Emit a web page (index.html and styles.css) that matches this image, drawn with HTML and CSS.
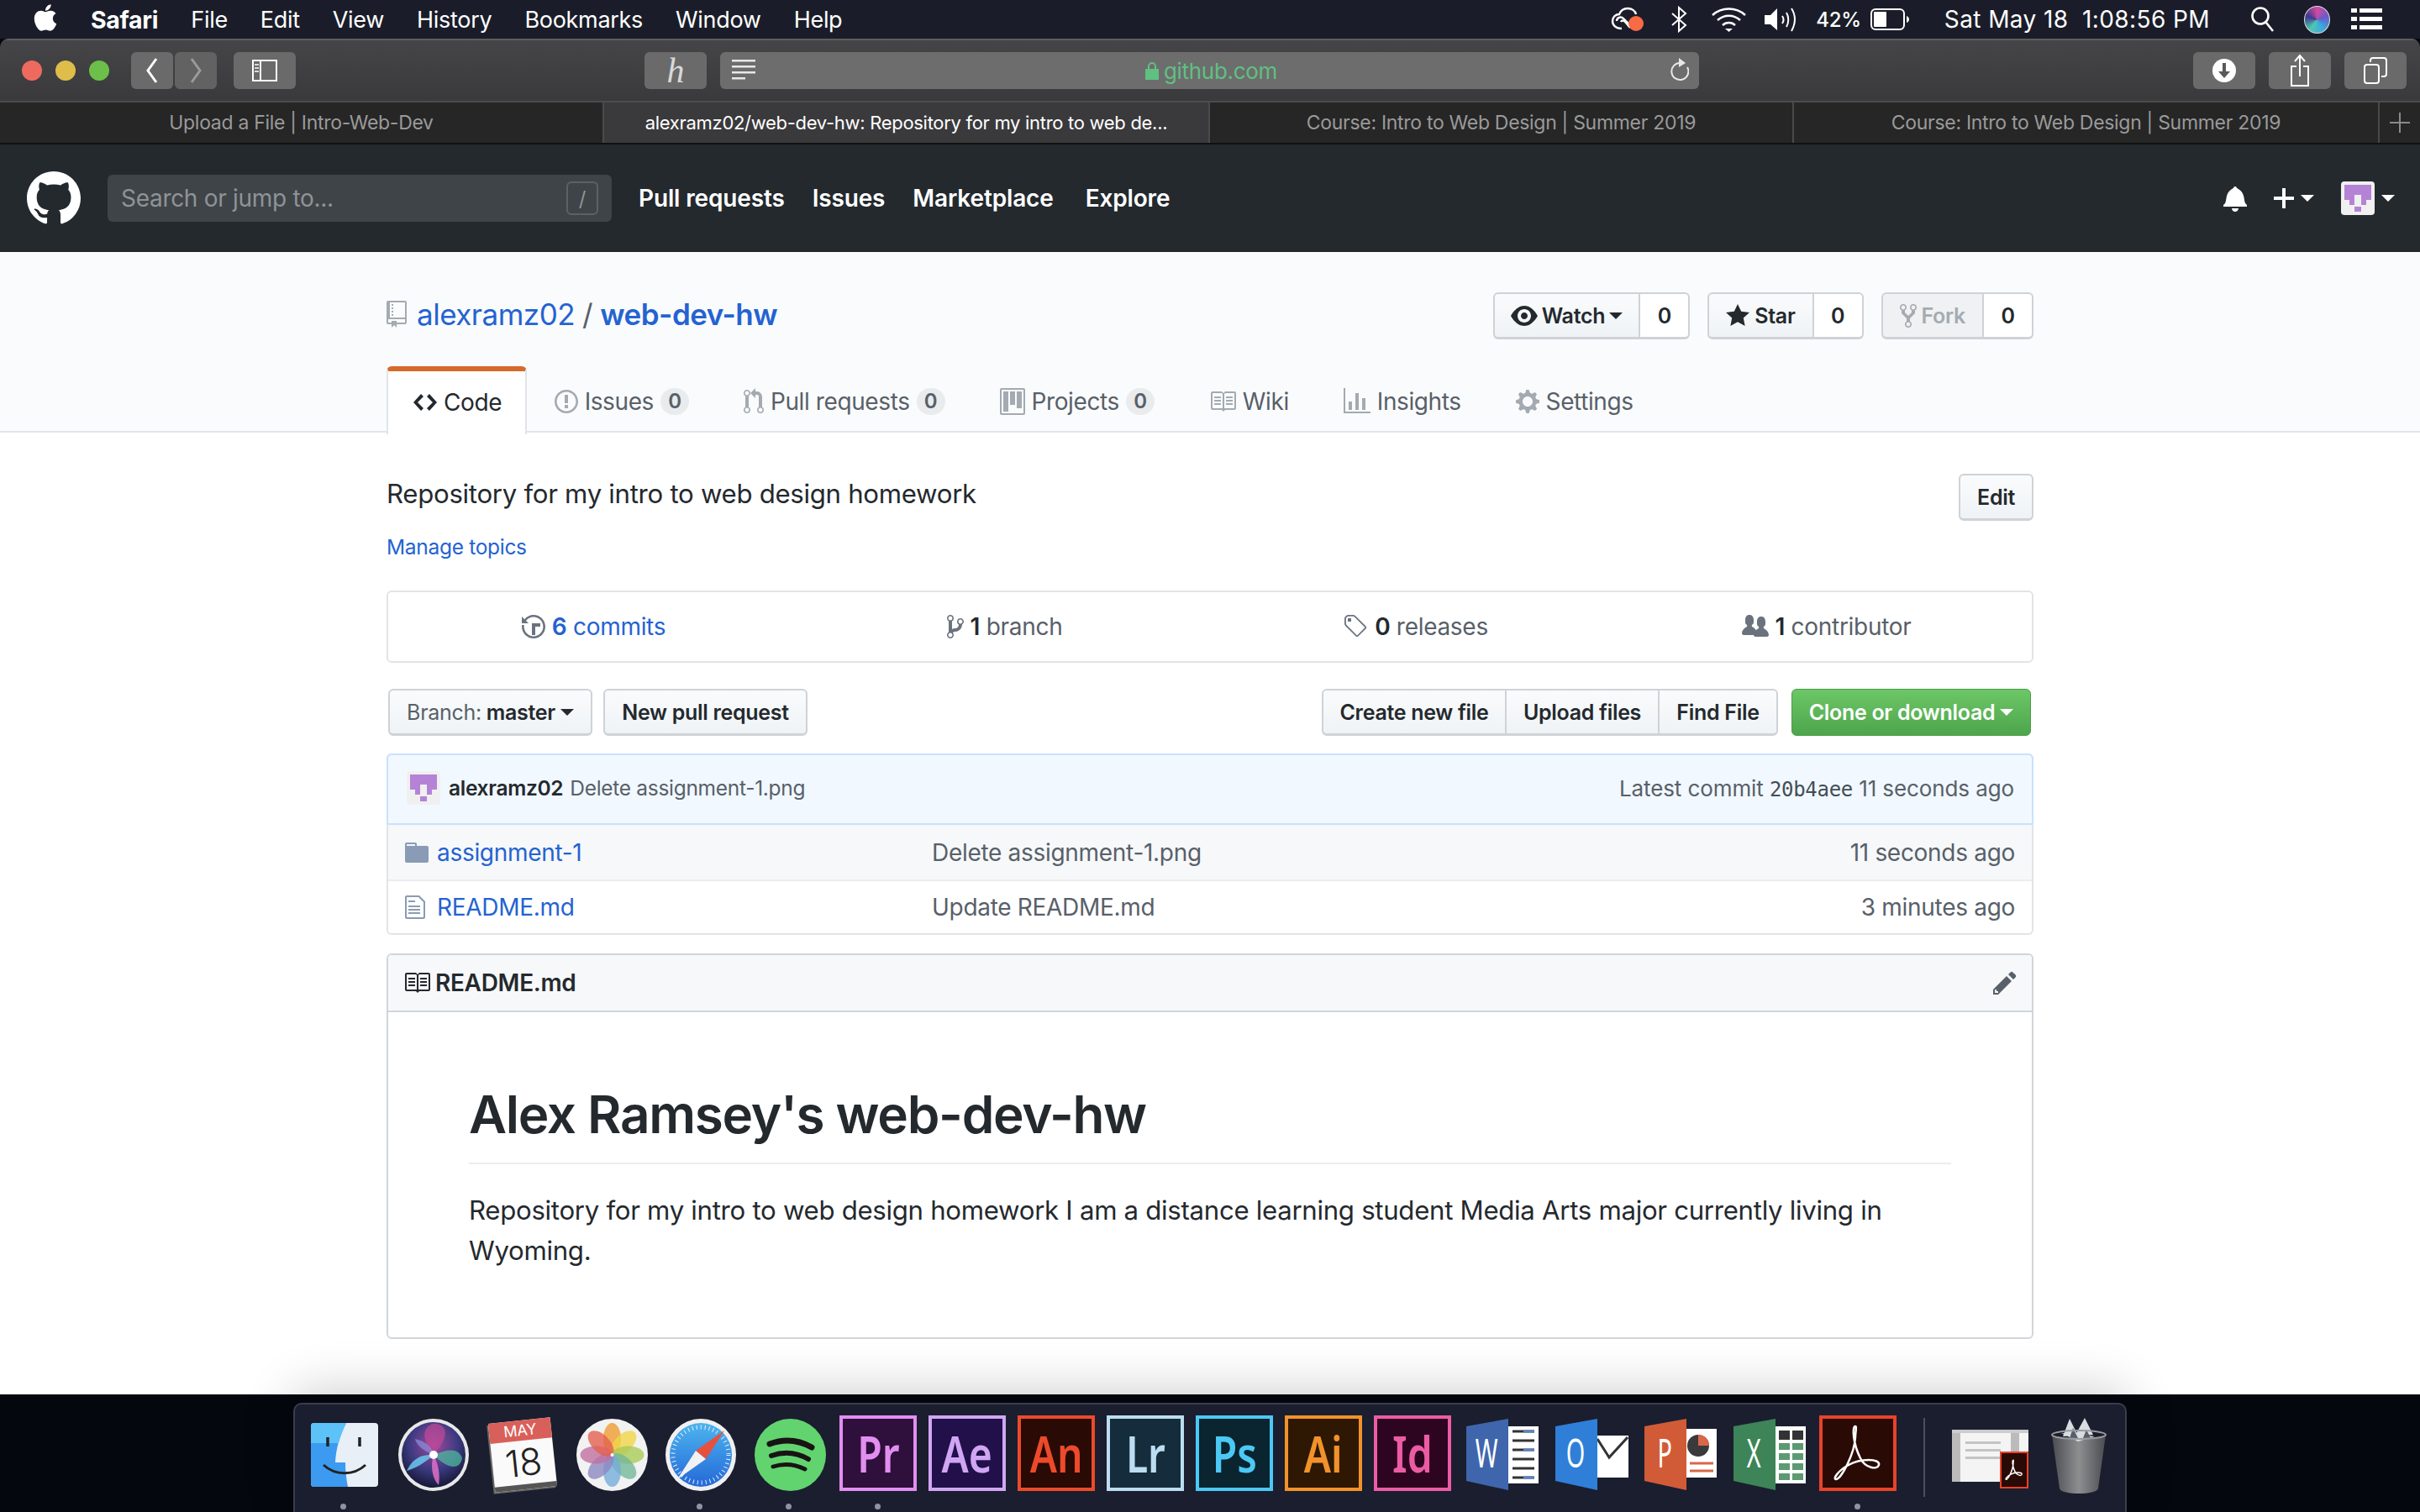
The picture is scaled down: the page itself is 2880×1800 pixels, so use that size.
FILE: index.html
```html
<!DOCTYPE html>
<html lang="en">
<head>
  <meta charset="UTF-8">
  <title>alexramz02/web-dev-hw</title>
  <link rel="stylesheet" href="styles.css">
</head>
<body>
  <!-- octicons -->
  <svg class="sprite" xmlns="http://www.w3.org/2000/svg">
    <symbol id="i-repo" viewBox="0 0 12 16"><path d="M4 9H3V8h1v1zm0-3H3v1h1V6zm0-2H3v1h1V4zm0-2H3v1h1V2zm8-1v12c0 .55-.45 1-1 1H6v2l-1.5-1.5L3 16v-2H1c-.55 0-1-.45-1-1V1c0-.55.45-1 1-1h10c.55 0 1 .45 1 1zm-1 10H1v2h2v-1h3v1h5v-2zm0-10H2v9h9V1z"/></symbol>
    <symbol id="i-eye" viewBox="0 0 16 16"><path d="M8.06 2C3 2 0 8 0 8s3 6 8.06 6C13 14 16 8 16 8s-3-6-7.94-6zM8 12c-2.2 0-4-1.78-4-4 0-2.2 1.8-4 4-4 2.22 0 4 1.8 4 4 0 2.22-1.78 4-4 4zm2-4c0 1.11-.89 2-2 2-1.11 0-2-.89-2-2 0-1.11.89-2 2-2 1.11 0 2 .89 2 2z"/></symbol>
    <symbol id="i-star" viewBox="0 0 14 16"><path d="M14 6l-4.9-.64L7 1 4.9 5.36 0 6l3.6 3.26L2.67 14 7 11.67 11.33 14l-.93-4.74L14 6z"/></symbol>
    <symbol id="i-fork" viewBox="0 0 10 16"><path d="M8 1a1.993 1.993 0 0 0-1 3.72V6L5 8 3 6V4.72A1.993 1.993 0 0 0 2 1a1.993 1.993 0 0 0-1 3.72V6.5l3 3v1.78A1.993 1.993 0 0 0 5 15a1.993 1.993 0 0 0 1-3.72V9.5l3-3V4.72A1.993 1.993 0 0 0 8 1zM2 4.2C1.34 4.2.8 3.65.8 3c0-.65.55-1.2 1.2-1.2.65 0 1.2.55 1.2 1.2 0 .65-.55 1.2-1.2 1.2zm3 10c-.66 0-1.2-.55-1.2-1.2 0-.65.55-1.2 1.2-1.2.65 0 1.2.55 1.2 1.2 0 .65-.55 1.2-1.2 1.2zm3-10c-.66 0-1.2-.55-1.2-1.2 0-.65.55-1.2 1.2-1.2.65 0 1.2.55 1.2 1.2 0 .65-.55 1.2-1.2 1.2z"/></symbol>
    <symbol id="i-code" viewBox="0 0 14 16"><path d="M9.5 3L8 4.5 11.5 8 8 11.5 9.5 13 14 8 9.5 3zm-5 0L0 8l4.5 5L6 11.5 2.5 8 6 4.5 4.5 3z"/></symbol>
    <symbol id="i-issue" viewBox="0 0 14 16"><path d="M7 2.3c3.14 0 5.7 2.56 5.7 5.7s-2.56 5.7-5.7 5.7A5.71 5.71 0 0 1 1.3 8c0-3.14 2.56-5.7 5.7-5.7zM7 1C3.14 1 0 4.14 0 8s3.14 7 7 7 7-3.14 7-7-3.14-7-7-7zm1 3H6v5h2V4zm0 6H6v2h2v-2z"/></symbol>
    <symbol id="i-pr" viewBox="0 0 12 16"><path d="M11 11.28V5c-.03-.78-.34-1.47-.94-2.06C9.46 2.35 8.78 2.03 8 2H7V0L4 3l3 3V4h1c.27.02.48.11.69.31.21.2.3.42.31.69v6.28A1.993 1.993 0 0 0 10 15a1.993 1.993 0 0 0 1-3.72zm-1 2.92c-.66 0-1.2-.55-1.2-1.2 0-.65.55-1.2 1.2-1.2.65 0 1.2.55 1.2 1.2 0 .65-.55 1.2-1.2 1.2zM4 3c0-1.11-.89-2-2-2a1.993 1.993 0 0 0-1 3.72v6.56A1.993 1.993 0 0 0 2 15a1.993 1.993 0 0 0 1-3.72V4.72c.59-.34 1-.98 1-1.72zm-.8 10c0 .66-.55 1.2-1.2 1.2-.65 0-1.2-.55-1.2-1.2 0-.65.55-1.2 1.2-1.2.65 0 1.2.55 1.2 1.2zM2 4.2C1.34 4.2.8 3.65.8 3c0-.65.55-1.2 1.2-1.2.65 0 1.2.55 1.2 1.2 0 .65-.55 1.2-1.2 1.2z"/></symbol>
    <symbol id="i-project" viewBox="0 0 15 16"><path fill-rule="evenodd" d="M10 12h3V2h-3v10zm-4-2h3V2H6v8zm-4 4h3V2H2v12zm-1 1h13V1H1v14zM14 0H1a1 1 0 0 0-1 1v14a1 1 0 0 0 1 1h13a1 1 0 0 0 1-1V1a1 1 0 0 0-1-1z"/></symbol>
    <symbol id="i-book" viewBox="0 0 16 16"><path d="M3 5h4v1H3V5zm0 3h4V7H3v1zm0 2h4V9H3v1zm11-5h-4v1h4V5zm0 2h-4v1h4V7zm0 2h-4v1h4V9zm2-6v9c0 .55-.45 1-1 1H9.5l-1 1-1-1H2c-.55 0-1-.45-1-1V3c0-.55.45-1 1-1h5.5l1 1 1-1H15c.55 0 1 .45 1 1zm-8 .5L7.5 3H2v9h6V3.5zm7-.5H9.5l-.5.5V12h6V3z"/></symbol>
    <symbol id="i-graph" viewBox="0 0 16 16"><path d="M16 14v1H0V0h1v14h15zM5 13H3V8h2v5zm4 0H7V3h2v10zm4 0h-2V6h2v7z"/></symbol>
    <symbol id="i-gear" viewBox="0 0 14 16"><path d="M14 8.77v-1.6l-1.94-.64-.45-1.09.88-1.84-1.13-1.13-1.81.91-1.09-.45-.69-1.92h-1.6l-.63 1.94-1.11.45-1.84-.88-1.13 1.13.91 1.81-.45 1.09L0 7.23v1.59l1.94.64.45 1.09-.88 1.84 1.13 1.13 1.81-.91 1.09.45.69 1.92h1.59l.63-1.94 1.11-.45 1.84.88 1.13-1.13-.92-1.81.47-1.09L14 8.75v.02zM7 11c-1.66 0-3-1.34-3-3s1.34-3 3-3 3 1.34 3 3-1.34 3-3 3z"/></symbol>
    <symbol id="i-history" viewBox="0 0 14 16"><path d="M8 13H6V6h5v2H8v5zM7 1C4.81 1 2.87 2.02 1.59 3.59L0 2v4h4L2.5 4.5C3.55 3.17 5.17 2.3 7 2.3c3.14 0 5.7 2.56 5.7 5.7s-2.56 5.7-5.7 5.7A5.71 5.71 0 0 1 1.3 8c0-.34.03-.67.09-1H.08C.03 7.33 0 7.66 0 8c0 3.86 3.14 7 7 7s7-3.14 7-7-3.14-7-7-7z"/></symbol>
    <symbol id="i-branch" viewBox="0 0 10 16"><path d="M10 5c0-1.11-.89-2-2-2a1.993 1.993 0 0 0-1 3.72v.3c-.02.52-.23.98-.63 1.38-.4.4-.86.61-1.38.63-.83.02-1.48.16-2 .45V4.72a1.993 1.993 0 0 0-1-3.72C.88 1 0 1.89 0 3a2 2 0 0 0 1 1.72v6.56c-.59.35-1 .99-1 1.72 0 1.11.89 2 2 2 1.11 0 2-.89 2-2 0-.53-.2-1-.53-1.36.09-.06.48-.41.59-.47.25-.11.56-.17.94-.17 1.05-.05 1.95-.45 2.75-1.25S8.95 7.77 9 6.73h-.02C9.59 6.37 10 5.73 10 5zM2 1.8c.66 0 1.2.55 1.2 1.2 0 .65-.55 1.2-1.2 1.2C1.35 4.2.8 3.65.8 3c0-.65.55-1.2 1.2-1.2zm0 12.41c-.66 0-1.2-.55-1.2-1.2 0-.65.55-1.2 1.2-1.2.65 0 1.2.55 1.2 1.2 0 .65-.55 1.2-1.2 1.2zm6-8c-.66 0-1.2-.55-1.2-1.2 0-.65.55-1.2 1.2-1.2.65 0 1.2.55 1.2 1.2 0 .65-.55 1.2-1.2 1.2z"/></symbol>
    <symbol id="i-tag" viewBox="0 0 15 16"><path d="M7.73 1.73C7.26 1.26 6.62 1 5.96 1H3.5C2.13 1 1 2.13 1 3.5v2.47c0 .66.27 1.3.73 1.77l6.06 6.06c.39.39 1.02.39 1.41 0l4.59-4.59a.996.996 0 0 0 0-1.41L7.73 1.73zM2.38 7.09c-.31-.3-.47-.7-.47-1.13V3.5c0-.88.72-1.59 1.59-1.59h2.47c.42 0 .83.16 1.13.47l6.14 6.13-4.73 4.73-6.13-6.15zM3.01 3h2v2H3V3h.01z"/></symbol>
    <symbol id="i-org" viewBox="0 0 16 16"><path d="M16 12.999c0 .439-.45 1-1 1H7.995c-.539 0-.994-.447-.995-.999H1c-.54 0-1-.561-1-1 0-2.634 3-4 3-4s.229-.409 0-1c-.841-.621-1.058-.59-1-3 .058-2.419 1.367-3 2.5-3s2.442.58 2.5 3c.058 2.41-.159 2.379-1 3-.229.59 0 1 0 1s1.549.711 2.42 2.088C9.196 9.369 10 8.999 10 8.999s.229-.409 0-1c-.841-.62-1.058-.59-1-3 .058-2.419 1.367-3 2.5-3s2.437.581 2.495 3c.059 2.41-.158 2.38-1 3-.229.59 0 1 0 1s3.005 1.366 3.005 4z"/></symbol>
    <symbol id="i-dir" viewBox="0 0 14 16"><path d="M13 4H7V3c0-.66-.31-1-1-1H1c-.55 0-1 .45-1 1v10c0 .55.45 1 1 1h12c.55 0 1-.45 1-1V5c0-.55-.45-1-1-1zM6 4H1V3h5v1z"/></symbol>
    <symbol id="i-file" viewBox="0 0 12 16"><path d="M6 5H2V4h4v1zM2 8h7V7H2v1zm0 2h7V9H2v1zm0 2h7v-1H2v1zm10-7.5V14c0 .55-.45 1-1 1H1c-.55 0-1-.45-1-1V2c0-.55.45-1 1-1h7.5L12 4.5zM11 5L8 2H1v12h10V5z"/></symbol>
    <symbol id="i-pencil" viewBox="0 0 14 16"><path d="M0 12v3h3l8-8-3-3-8 8zm3 2H1v-2h1v1h1v1zm10.3-9.3L12 6 9 3l1.3-1.3a.996.996 0 0 1 1.41 0l1.59 1.59c.39.39.39 1.02 0 1.41z"/></symbol>
    <symbol id="i-github" viewBox="0 0 16 16"><path d="M8 0C3.58 0 0 3.58 0 8c0 3.54 2.29 6.53 5.47 7.59.4.07.55-.17.55-.38 0-.19-.01-.82-.01-1.49-2.01.37-2.53-.49-2.69-.94-.09-.23-.48-.94-.82-1.13-.28-.15-.68-.52-.01-.53.63-.01 1.08.58 1.23.82.72 1.21 1.87.87 2.33.66.07-.52.28-.87.51-1.07-1.78-.2-3.64-.89-3.64-3.95 0-.87.31-1.59.82-2.15-.08-.2-.36-1.02.08-2.12 0 0 .67-.21 2.2.82.64-.18 1.32-.27 2-.27.68 0 1.36.09 2 .27 1.53-1.04 2.2-.82 2.2-.82.44 1.1.16 1.92.08 2.12.51.56.82 1.27.82 2.15 0 3.07-1.87 3.75-3.65 3.95.29.25.54.73.54 1.48 0 1.07-.01 1.93-.01 2.2 0 .21.15.46.55.38A8.013 8.013 0 0 0 16 8c0-4.42-3.58-8-8-8z"/></symbol>
    <symbol id="i-bell" viewBox="0 0 14 16"><path d="M14 12v1H0v-1l.73-.58c.77-.77.81-2.55 1.19-4.42C2.69 3.23 6 2 6 2c0-.55.45-1 1-1s1 .45 1 1c0 0 3.39 1.23 4.16 5 .38 1.88.42 3.66 1.19 4.42l.66.58H14zm-7 4c1.11 0 2-.89 2-2H5c0 1.11.89 2 2 2z"/></symbol>
    <symbol id="i-plus" viewBox="0 0 12 16"><path d="M12 9H7v5H5V9H0V7h5V2h2v5h5v2z"/></symbol>
    <symbol id="i-avatar" viewBox="0 0 40 40">
      <rect width="40" height="40" rx="4" fill="#f0f0f0"/>
      <path d="M4 4h32v18h-6v6h-6V16h-8v12h-6v-6H4z" fill="#b583d6"/>
      <rect x="16" y="30" width="8" height="6" fill="#b583d6"/>
    </symbol>
  </svg>

  <div class="menubar">
    <svg class="apple" viewBox="0 0 384 512"><path fill="#fff" d="M318.7 268.7c-.2-36.7 16.4-64.4 50-84.8-18.8-26.9-47.2-41.7-84.7-44.6-35.5-2.8-74.3 20.7-88.5 20.7-15 0-49.4-19.7-76.4-19.7C63.3 141.2 4 184.8 4 273.5q0 39.3 14.4 81.2c12.8 36.7 59 126.7 107.2 125.2 25.2-.6 43-17.9 75.8-17.9 31.8 0 48.3 17.9 76.4 17.9 48.6-.7 90.4-82.5 102.6-119.3-65.2-30.7-61.7-90-61.7-91.9zm-56.6-164.2c27.3-32.4 24.8-61.9 24-72.5-24.1 1.4-52 16.4-67.9 34.9-17.5 19.8-27.8 44.3-25.6 71.9 26.1 2 49.9-11.4 69.5-34.3z"/></svg>
    <nav class="menu-items">
      <span class="menu-app">Safari</span>
      <span>File</span>
      <span>Edit</span>
      <span>View</span>
      <span>History</span>
      <span>Bookmarks</span>
      <span>Window</span>
      <span>Help</span>
    </nav>
    <div class="status">
      <svg class="st-cc" width="42" height="32" viewBox="0 0 42 32" fill="none" stroke="#fff" stroke-width="2.4">
        <path d="M14 27C7 27 3 23 3 18c0-5 4-8 8-8 2-5 6-7 10-7 5 0 9 3 10 7"/>
        <path d="M8 18c0-4 5-6 8-3l9 9" /><path d="M13 19c1-2 3-2 5 0l6 7"/>
        <circle cx="31" cy="21" r="9" fill="#f96b45" stroke="none"/>
      </svg>
      <svg class="st-bt" width="20" height="32" viewBox="0 0 20 32" fill="none" stroke="#fff" stroke-width="2"><path d="M2 9l16 14-8 7V2l8 7L2 23"/></svg>
      <svg class="st-wifi" width="43" height="32" viewBox="0 0 43 32" fill="none" stroke="#fff" stroke-width="2.6"><path d="M2 11c11-10 28-10 39 0"/><path d="M8 17c8-7 19-7 27 0"/><path d="M14 23c4-4 11-4 15 0"/><path d="M17 27h9l-4.500 4z" fill="#fff" stroke="none"/></svg>
      <svg class="st-vol" width="41" height="32" viewBox="0 0 41 32" fill="none" stroke="#fff" stroke-width="2"><path d="M1 11h7l8-8v26l-8-7H1z" fill="#fff" stroke="none"/><path d="M22 12c2 3 2 6 0 9"/><path d="M27 8c3 5 3 12 0 17"/><path d="M33 3c5 8 5 18 0 27"/></svg>
      <span class="st-batt">42%</span>
      <svg class="st-battery" width="46" height="26" viewBox="0 0 46 26"><rect x="1" y="1" width="39" height="24" rx="5" fill="none" stroke="#fff" stroke-width="2"/><rect x="4" y="4" width="15" height="18" rx="1" fill="#fff"/><path d="M43 9c2 1 3 2 3 4s-1 3-3 4z" fill="#fff"/></svg>
      <span class="st-time">Sat May 18&nbsp;&nbsp;1:08:56 PM</span>
      <svg class="st-search" width="29" height="32" viewBox="0 0 29 32" fill="none" stroke="#fff" stroke-width="2.6"><circle cx="12" cy="12" r="9.500"/><path d="M19 20l8 10"/></svg>
      <span class="st-siri"></span>
      <svg class="st-list" width="37" height="26" viewBox="0 0 37 26" fill="#fff"><rect width="7" height="5"/><rect x="10" width="27" height="5"/><rect y="10" width="7" height="5"/><rect x="10" y="10" width="27" height="5"/><rect y="20" width="7" height="5"/><rect x="10" y="20" width="27" height="5"/></svg>
    </div>
  </div>

  <div class="window">
    <div class="toolbar">
      <div class="lights"><i class="red"></i><i class="yellow"></i><i class="green"></i></div>
      <button class="tb-btn tb-back"><svg width="20" height="34" viewBox="0 0 20 34" fill="none" stroke="#fff" stroke-width="3"><path d="M15 3L5 17l10 14"/></svg></button>
      <button class="tb-btn tb-fwd"><svg width="20" height="34" viewBox="0 0 20 34" fill="none" stroke="#9a9a9a" stroke-width="3"><path d="M5 3l10 14L5 31"/></svg></button>
      <button class="tb-btn tb-wide tb-side"><svg width="30" height="26" viewBox="0 0 30 26" fill="none" stroke="#fff" stroke-width="2"><rect x="1" y="1" width="28" height="24"/><path d="M10 1v24"/><path d="M3 6h5M3 10h5M3 14h5" stroke-width="1.500"/></svg></button>
      <button class="tb-btn tb-wide tb-hiero"><span>h</span></button>
      <div class="urlbar">
        <svg class="url-reader" width="28" height="26" viewBox="0 0 28 26" fill="#e8e8e8"><rect width="28" height="2.500"/><rect y="7" width="28" height="2.500"/><rect y="14" width="28" height="2.500"/><rect y="21" width="16" height="2.500"/></svg>
        <div class="url-text"><svg width="16" height="22" viewBox="0 0 16 22" fill="#5fc081"><rect y="9" width="16" height="13"/><path d="M3 10V6a5 5 0 0 1 10 0v4h-2V6a3 3 0 0 0-6 0v4z"/></svg>github.com</div>
        <svg class="url-reload" width="24" height="32" viewBox="0 0 24 32" fill="none" stroke="#e8e8e8" stroke-width="2"><path d="M14 7a10 10 0 1 0 8 5"/><path d="M12 1l8 6-8 5z" fill="#e8e8e8" stroke="none"/></svg>
      </div>
      <div class="tb-right">
        <button class="tb-btn tb-wide"><svg width="28" height="28" viewBox="0 0 28 28"><circle cx="14" cy="14" r="14" fill="#fff"/><path d="M14 23l-7-8h5V5h4v10h5z" fill="#5a5a5a"/></svg></button>
        <button class="tb-btn tb-wide"><svg width="24" height="40" viewBox="0 0 24 40" fill="none" stroke="#fff" stroke-width="2"><path d="M8 15H2v23h20V15h-6"/><path d="M12 27V3"/><path d="M6 9l6-7 6 7" /></svg></button>
        <button class="tb-btn tb-wide"><svg width="28" height="32" viewBox="0 0 28 32" fill="none" stroke="#fff" stroke-width="2"><rect x="1" y="9" width="17" height="22" rx="3"/><path d="M8 6V4a3 3 0 0 1 3-3h13a3 3 0 0 1 3 3v16a3 3 0 0 1-3 3h-3"/></svg></button>
      </div>
    </div>
    <div class="tabbar">
      <div class="tab tab-1">Upload a File | Intro-Web-Dev</div>
      <div class="tab tab-2 tab-active">alexramz02/web-dev-hw: Repository for my intro to web de...</div>
      <div class="tab tab-3">Course: Intro to Web Design | Summer 2019</div>
      <div class="tab tab-4">Course: Intro to Web Design | Summer 2019</div>
      <div class="tab tab-plus"><svg width="24" height="24" viewBox="0 0 24 24" fill="#8a8a8a"><rect x="11" width="2" height="24"/><rect y="11" width="24" height="2"/></svg></div>
    </div>

    <header class="gh-header">
      <svg class="gh-logo"><use href="#i-github"/></svg>
      <div class="gh-search"><span>Search or jump to...</span><kbd>/</kbd></div>
      <nav class="gh-nav">
        <a>Pull requests</a>
        <a>Issues</a>
        <a>Marketplace</a>
        <a class="gh-explore">Explore</a>
      </nav>
      <div class="gh-user">
        <svg class="gh-bell"><use href="#i-bell"/></svg>
        <svg class="gh-plus"><use href="#i-plus"/></svg>
        <i class="caret caret-w"></i>
        <svg class="gh-avatar"><use href="#i-avatar"/></svg>
        <i class="caret caret-w"></i>
      </div>
    </header>

    <div class="page">
      <div class="pagehead">
        <div class="container">
          <div class="repo-row">
            <h1 class="repo-title">
              <svg class="ic ic-12 muted"><use href="#i-repo"/></svg>
              <a class="link">alexramz02</a><span class="sep">/</span><a class="link strong">web-dev-hw</a>
            </h1>
            <div class="repo-actions">
              <div class="social"><span class="btn btn-social btn-watch"><svg class="ic ic-16"><use href="#i-eye"/></svg>Watch<i class="caret caret-tight"></i></span><span class="count">0</span></div>
              <div class="social"><span class="btn btn-social"><svg class="ic ic-14"><use href="#i-star"/></svg>Star</span><span class="count">0</span></div>
              <div class="social"><span class="btn btn-social btn-disabled"><svg class="ic ic-10"><use href="#i-fork"/></svg>Fork</span><span class="count">0</span></div>
            </div>
          </div>
          <nav class="reponav">
            <a class="navitem selected"><svg class="ic ic-14"><use href="#i-code"/></svg>Code</a>
            <a class="navitem"><svg class="ic ic-14 muted"><use href="#i-issue"/></svg>Issues<span class="counter">0</span></a>
            <a class="navitem"><svg class="ic ic-12 muted"><use href="#i-pr"/></svg>Pull requests<span class="counter">0</span></a>
            <a class="navitem"><svg class="ic ic-15 muted"><use href="#i-project"/></svg>Projects<span class="counter">0</span></a>
            <a class="navitem"><svg class="ic ic-16 muted"><use href="#i-book"/></svg>Wiki</a>
            <a class="navitem"><svg class="ic ic-16 muted"><use href="#i-graph"/></svg>Insights</a>
            <a class="navitem"><svg class="ic ic-14 muted"><use href="#i-gear"/></svg>Settings</a>
          </nav>
        </div>
      </div>

      <div class="container">
        <div class="meta">
          <div>
            <p class="description">Repository for my intro to web design homework</p>
            <a class="link topics">Manage topics</a>
          </div>
          <span class="btn btn-edit">Edit</span>
        </div>

        <div class="numbers">
          <div class="num"><svg class="ic ic-14 muted2"><use href="#i-history"/></svg><a class="link"><b>6</b> commits</a></div>
          <div class="num"><svg class="ic ic-10 muted2"><use href="#i-branch"/></svg><span><b>1</b> branch</span></div>
          <div class="num"><svg class="ic ic-15 muted2"><use href="#i-tag"/></svg><span><b>0</b> releases</span></div>
          <div class="num"><svg class="ic ic-16 muted2"><use href="#i-org"/></svg><span><b>1</b> contributor</span></div>
        </div>

        <div class="file-nav">
          <span class="btn btn-branch"><span class="light">Branch:</span>&nbsp;master<i class="caret"></i></span>
          <span class="btn btn-newpr">New pull request</span>
          <div class="btn-group">
            <span class="btn btn-create">Create new file</span>
            <span class="btn btn-upload">Upload files</span>
            <span class="btn btn-find">Find File</span>
          </div>
          <span class="btn btn-clone">Clone or download<i class="caret caret-w"></i></span>
        </div>

        <div class="files">
          <div class="tease">
            <svg class="tease-avatar"><use href="#i-avatar"/></svg>
            <b class="author">alexramz02</b>
            <span class="tease-msg">Delete assignment-1.png</span>
            <span class="tease-right">Latest commit <code>20b4aee</code> 11 seconds ago</span>
          </div>
          <div class="file-row first">
            <svg class="ic ic-14 folder"><use href="#i-dir"/></svg>
            <a class="link file-name">assignment-1</a>
            <span class="file-msg">Delete assignment-1.png</span>
            <span class="file-age">11 seconds ago</span>
          </div>
          <div class="file-row">
            <svg class="ic ic-12 folder file-ic"><use href="#i-file"/></svg>
            <a class="link file-name">README.md</a>
            <span class="file-msg">Update README.md</span>
            <span class="file-age">3 minutes ago</span>
          </div>
        </div>

        <div class="readme">
          <div class="readme-head">
            <svg class="ic ic-16"><use href="#i-book"/></svg>
            <b>README.md</b>
            <svg class="ic ic-14 pencil"><use href="#i-pencil"/></svg>
          </div>
          <article class="markdown">
            <h1>Alex Ramsey's web-dev-hw</h1>
            <p>Repository for my intro to web design homework I am a distance learning student Media Arts major currently living in Wyoming.</p>
          </article>
        </div>
      </div>
    </div>
  </div>

  <div class="dock">
    <div class="slot running">
      <svg width="80" height="76" viewBox="0 0 80 76">
        <rect width="80" height="76" rx="4" fill="#e9eff7"/>
        <path d="M4 0h38c-8 16-12 30-13 47h12c0 9 1 19 3 29H4a4 4 0 0 1-4-4V4a4 4 0 0 1 4-4z" fill="#3c9af0"/>
        <path d="M4 0h38c-4 8-7 16-9 24H0V4a4 4 0 0 1 4-4z" fill="#5cc2f7"/>
        <path d="M20 17v11M58 17v11" stroke="#222" stroke-width="3.500"/>
        <path d="M15 50c14 13 36 13 50 0" fill="none" stroke="#222" stroke-width="3"/>
      </svg>
    </div>
    <div class="slot">
      <svg width="84" height="86" viewBox="0 0 84 86">
        <defs>
          <radialGradient id="siri-bg" cx=".5" cy=".35" r=".7"><stop offset="0" stop-color="#a04a9c"/><stop offset=".55" stop-color="#3b3a80"/><stop offset="1" stop-color="#10122a"/></radialGradient>
        </defs>
        <ellipse cx="42" cy="43" rx="42" ry="43" fill="#e8e8e8"/>
        <ellipse cx="42" cy="43" rx="38" ry="39" fill="url(#siri-bg)"/>
        <path d="M42 43C30 25 26 14 40 6c14-2 26 10 2 37z" fill="#c04a98" opacity=".7"/>
        <path d="M42 43c18-8 30-8 34 4-2 12-14 16-34-4z" fill="#4fc0a0" opacity=".7"/>
        <path d="M42 43C30 54 18 60 10 62c6-12 14-20 32-19z" fill="#6cc8f0" opacity=".85"/>
        <path d="M42 43c6 12 8 24 6 36-8-8-10-24-6-36z" fill="#e070c8" opacity=".85"/>
        <path d="M42 43C30 38 22 32 20 24c10 2 20 8 22 19z" fill="#8c90e0" opacity=".7"/>
        <circle cx="42" cy="43" r="5" fill="#fff"/>
      </svg>
    </div>
    <div class="slot">
      <div class="calendar"><div class="cal-month">MAY</div><div class="cal-day">18</div></div>
    </div>
    <div class="slot">
      <svg width="85" height="86" viewBox="0 0 85 86">
        <ellipse cx="42.500" cy="43" rx="42.500" ry="43" fill="#f2f2f2"/>
        <g transform="translate(42.500 43)">
          <ellipse cy="-19" rx="10.500" ry="19" fill="#ee9c30" opacity=".8"/>
          <ellipse cy="-19" rx="10.500" ry="19" fill="#f0d448" opacity=".8" transform="rotate(45)"/>
          <ellipse cy="-19" rx="10.500" ry="19" fill="#aacb58" opacity=".8" transform="rotate(90)"/>
          <ellipse cy="-19" rx="10.500" ry="19" fill="#74b898" opacity=".8" transform="rotate(135)"/>
          <ellipse cy="-19" rx="10.500" ry="19" fill="#74acd8" opacity=".8" transform="rotate(180)"/>
          <ellipse cy="-19" rx="10.500" ry="19" fill="#8c88c0" opacity=".8" transform="rotate(225)"/>
          <ellipse cy="-19" rx="10.500" ry="19" fill="#c070a0" opacity=".8" transform="rotate(270)"/>
          <ellipse cy="-19" rx="10.500" ry="19" fill="#e46050" opacity=".8" transform="rotate(315)"/>
          <circle r="2" fill="#fff"/>
        </g>
      </svg>
    </div>
    <div class="slot running">
      <svg width="84" height="86" viewBox="0 0 84 86">
        <defs><linearGradient id="safari-bg" x1="0" y1="0" x2="0" y2="1"><stop offset="0" stop-color="#4db4ee"/><stop offset="1" stop-color="#2468d8"/></linearGradient></defs>
        <ellipse cx="42" cy="43" rx="42" ry="43" fill="#f0f0f0"/>
        <ellipse cx="42" cy="43" rx="37" ry="38" fill="url(#safari-bg)"/>
        <circle cx="42" cy="43" r="33" fill="none" stroke="#dff0fb" stroke-width="5" stroke-dasharray="1 4"/>
        <path d="M70 14L36 38l12 10z" fill="#e6503c"/>
        <path d="M14 72l34-24-12-10z" fill="#f2f2f2"/>
      </svg>
    </div>
    <div class="slot running">
      <svg width="85" height="86" viewBox="0 0 85 86" fill="none" stroke="#191414" stroke-linecap="round">
        <ellipse cx="42.500" cy="43" rx="42.500" ry="43" fill="#62d46f" stroke="none"/>
        <path d="M18 30c16-6 34-5 50 4" stroke-width="7"/>
        <path d="M20 44c14-5 30-4 44 4" stroke-width="6"/>
        <path d="M22 57c12-4 26-3 38 3" stroke-width="5"/>
      </svg>
    </div>
    <div class="slot running"><div class="tile tile-pr"><span>Pr</span></div></div>
    <div class="slot"><div class="tile tile-ae"><span>Ae</span></div></div>
    <div class="slot"><div class="tile tile-an"><span>An</span></div></div>
    <div class="slot"><div class="tile tile-lr"><span>Lr</span></div></div>
    <div class="slot"><div class="tile tile-ps"><span>Ps</span></div></div>
    <div class="slot"><div class="tile tile-ai"><span>Ai</span></div></div>
    <div class="slot"><div class="tile tile-id"><span>Id</span></div></div>
    <div class="slot">
      <svg class="office" width="86" height="86" viewBox="0 0 86 86">
        <rect x="48" y="9" width="38" height="68" fill="#fff"/>
        <path d="M55 15h26M55 26h26M55 37h26M55 48h26M55 59h26M55 70h26" stroke="#333" stroke-width="3"/>
        <path d="M68 15h13M68 37h13M68 70h13" stroke="#5b82c0" stroke-width="3"/>
        <path d="M0 9L50 0v85L0 74z" fill="#3f66ad"/>
        <text transform="translate(24 58) scale(.72 1.2)" class="office-letter">W</text>
      </svg>
    </div>
    <div class="slot">
      <svg class="office" width="87" height="86" viewBox="0 0 87 86">
        <rect x="50" y="20" width="37" height="50" fill="#fff"/>
        <path d="M50 24l14 22 22-24" fill="none" stroke="#333" stroke-width="3"/>
        <path d="M0 9L50 0v85L0 74z" fill="#2f7fd8"/>
        <text transform="translate(24 58) scale(.72 1.2)" class="office-letter">O</text>
      </svg>
    </div>
    <div class="slot">
      <svg class="office" width="86" height="86" viewBox="0 0 86 86">
        <rect x="50" y="12" width="36" height="58" fill="#fff"/>
        <circle cx="64" cy="32" r="13" fill="#3a3a3a"/>
        <path d="M64 19a13 13 0 0 1 13 13H64z" fill="#d9674a"/>
        <path d="M54 53h28M54 62h28" stroke="#d9674a" stroke-width="3"/>
        <path d="M0 9L50 0v85L0 74z" fill="#d25b37"/>
        <text transform="translate(24 58) scale(.72 1.2)" class="office-letter">P</text>
      </svg>
    </div>
    <div class="slot">
      <svg class="office" width="86" height="86" viewBox="0 0 86 86">
        <rect x="50" y="9" width="36" height="68" fill="#fff"/>
        <path d="M54 14h13v11H54zM70 14h13v11H70z" fill="#333"/>
        <path d="M54 29h13v8H54zM70 29h13v8H70zM54 41h13v8H54zM70 41h13v8H70zM54 53h13v8H54zM70 53h13v8H70zM54 65h13v8H54zM70 65h13v8H70z" fill="#5c9a72"/>
        <path d="M0 9L50 0v85L0 74z" fill="#3d8458"/>
        <text transform="translate(24 58) scale(.72 1.2)" class="office-letter">X</text>
      </svg>
    </div>
    <div class="slot running">
      <div class="tile tile-acro">
        <svg width="60" height="70" viewBox="0 0 60 70" fill="none" stroke="#fff" stroke-width="2.500">
          <path d="M27 3c-4 0-3 20 6 38 6 12 20 14 22 8 2-8-22-8-36 0C6 56 0 66 4 66c6 0 22-30 23-50 0-6 2-13 0-13z"/>
        </svg>
      </div>
    </div>
    <div class="dock-sep"></div>
    <div class="slot">
      <div class="thumb">
        <div class="thumb-page"><i></i><i></i><i></i></div>
        <div class="thumb-pdf"><svg width="22" height="30" viewBox="0 0 60 70" fill="none" stroke="#fff" stroke-width="4"><path d="M27 3c-4 0-3 20 6 38 6 12 20 14 22 8 2-8-22-8-36 0C6 56 0 66 4 66c6 0 22-30 23-50 0-6 2-13 0-13z"/></svg></div>
      </div>
    </div>
    <div class="slot">
      <svg width="70" height="92" viewBox="0 0 70 92">
        <defs><linearGradient id="trash" x1="0" y1="0" x2="1" y2="0"><stop offset="0" stop-color="#4a4c50"/><stop offset=".5" stop-color="#8c8e90"/><stop offset="1" stop-color="#4a4c50"/></linearGradient></defs>
        <path d="M3 22c10 6 54 6 64 0l-9 64c-2 8-44 8-46 0z" fill="url(#trash)"/>
        <path d="M16 24L24 3l10 20M30 24L42 2l10 20M14 20l40 4-20 6z" fill="#d8dce0"/>
        <path d="M24 26l4-12 6 12zM40 26l4-10 5 10z" fill="#55606a"/>
        <ellipse cx="35" cy="22" rx="32" ry="5" fill="none" stroke="#9a9c9e" stroke-width="2"/>
      </svg>
    </div>
  </div>
</body>
</html>
```

FILE: styles.css
```css
* {
  box-sizing: border-box;
}
html, body {
  margin: 0;
  padding: 0;
}
body {
  width: 2880px;
  height: 1800px;
  overflow: hidden;
  display: flex;
  flex-direction: column;
  background-color: #05070f;
  font-family: Inter, "Noto Sans", sans-serif;
  letter-spacing: -0.3px;
  color: #24292e;
}
.sprite {
  display: none;
}
a {
  text-decoration: none;
}
button {
  font: inherit;
  padding: 0;
  border: none;
}

/* mac menu bar */
.menubar {
  height: 46px;
  flex: none;
  display: flex;
  align-items: center;
  padding-left: 40px;
  padding-right: 45px;
  background-color: #1a1d29;
  color: #fff;
  font-size: 27px;
}
.apple {
  width: 28px;
  height: 36px;
  margin-top: -4px;
}
.menu-items {
  display: flex;
  align-items: center;
  gap: 39px;
  margin-left: 40px;
}
.menu-app {
  font-weight: 700;
  font-size: 28.5px;
}
.status {
  margin-left: auto;
  display: flex;
  align-items: center;
}
.status svg {
  flex: none;
}
.st-bt { margin-left: 30px; }
.st-wifi { margin-left: 28px; }
.st-vol { margin-left: 20px; }
.st-batt { margin-left: 21px; font-size: 24px; font-weight: 500; }
.st-battery { margin-left: 11px; }
.st-time { margin-left: 42px; font-size: 28px; letter-spacing: 0.4px; }
.st-search { margin-left: 48px; }
.st-siri {
  margin-left: 35px;
  width: 31px;
  height: 33px;
  border-radius: 50%;
  border: 1px solid #ddd;
  background: conic-gradient(#d04aa0, #6a5ac8, #3aa8e0, #50c8b0, #3a3a90, #d04aa0);
}
.st-list { margin-left: 25px; }

/* safari window */
.window {
  height: 1614px;
  flex: none;
  display: flex;
  flex-direction: column;
  border-radius: 10px 10px 0 0;
  overflow: hidden;
}
.toolbar {
  height: 76px;
  flex: none;
  display: flex;
  align-items: center;
  padding-left: 26px;
  padding-right: 16px;
  border-top: 2px solid #5e5e5e;
  border-bottom: 2px solid #4c4c4c;
  background: linear-gradient(#454547, #3a3a3c);
}
.lights {
  display: flex;
  gap: 16px;
}
.lights i {
  display: block;
  width: 24px;
  height: 24px;
  border-radius: 50%;
}
.lights .red { background-color: #ee6a5f; }
.lights .yellow { background-color: #dfbd4a; }
.lights .green { background-color: #6cc04a; }
.tb-btn {
  width: 50px;
  height: 44px;
  flex: none;
  display: flex;
  align-items: center;
  justify-content: center;
  background-color: #6a6a6a;
  border-radius: 6px;
  color: #e6e6e6;
}
.tb-back { margin-left: 26px; }
.tb-fwd { margin-left: 2px; background-color: #626262; }
.tb-wide { width: 74px; }
.tb-side { margin-left: 20px; }
.tb-hiero {
  margin-left: 415px;
  font-family: "Liberation Serif", serif;
  font-style: italic;
  font-size: 42px;
  color: #d8d8d8;
}
.urlbar {
  width: 1165px;
  height: 44px;
  margin-left: 16px;
  display: flex;
  align-items: center;
  padding: 0 12px 0 14px;
  background-color: #6d6d6d;
  border-radius: 6px;
}
.url-reader {
  flex: none;
}
.url-text {
  flex: 1;
  display: flex;
  justify-content: center;
  align-items: center;
  gap: 6px;
  color: #5fc081;
  font-size: 26px;
  margin-left: -2px;
}
.url-reload {
  flex: none;
}
.tb-right {
  margin-left: auto;
  display: flex;
  gap: 16px;
}

.tabbar {
  height: 50px;
  flex: none;
  display: flex;
  background-color: #262626;
  border-bottom: 2px solid #111;
  font-size: 23px;
  color: #9a9a9a;
}
.tab {
  display: flex;
  align-items: center;
  justify-content: center;
  border-right: 2px solid #4a4a4a;
  white-space: nowrap;
}
.tab-1 { width: 719px; }
.tab-2 { width: 721px; }
.tab-3 { width: 695px; }
.tab-4 { width: 697px; }
.tab-plus { flex: 1; border-right: none; }
.tab-active {
  background-color: #3a3a3c;
  color: #fff;
  font-size: 22px;
}

/* github header */
.gh-header {
  height: 128px;
  flex: none;
  display: flex;
  align-items: center;
  padding: 0 32px;
  background-color: #24292e;
  color: #fff;
}
.gh-logo {
  width: 64px;
  height: 64px;
  fill: #fff;
}
.gh-search {
  width: 600px;
  height: 56px;
  margin-left: 32px;
  display: flex;
  align-items: center;
  justify-content: space-between;
  padding: 0 16px 0 16px;
  background-color: #3f4448;
  border-radius: 6px;
  color: #8f9397;
  font-size: 28px;
}
.gh-search kbd {
  width: 38px;
  height: 40px;
  display: flex;
  align-items: center;
  justify-content: center;
  border: 2px solid #5c6166;
  border-radius: 6px;
  font-family: inherit;
  font-size: 24px;
  color: #8f9397;
}
.gh-nav {
  display: flex;
  gap: 33px;
  margin-left: 32px;
  font-size: 28px;
  font-weight: 600;
  letter-spacing: -0.15px;
}
.gh-explore {
  margin-left: 5px;
}
.gh-user {
  margin-left: auto;
  display: flex;
  align-items: center;
  margin-right: -2px;
}
.gh-bell {
  width: 28px;
  height: 32px;
  fill: #fff;
}
.gh-plus {
  width: 24px;
  height: 32px;
  margin-left: 32px;
  fill: #fff;
}
.gh-avatar {
  width: 40px;
  height: 40px;
  margin-left: 32px;
}
.gh-user .caret {
  margin-left: 8px;
}

.caret {
  display: inline-block;
  width: 0;
  height: 0;
  margin-left: 6px;
  border-style: solid;
  border-width: 8px 8px 0;
  border-color: #24292e transparent transparent;
  vertical-align: middle;
}
.caret-w {
  border-top-color: #fff;
}
.caret-tight {
  margin-left: 0;
}

/* page */
.page {
  flex: 1;
  background-color: #fff;
}
.container {
  width: 1960px;
  margin: 0 auto;
}
.pagehead {
  height: 215px;
  padding-top: 48px;
  background-color: #fafbfc;
  border-bottom: 2px solid #e1e4e8;
}
.repo-row {
  display: flex;
  justify-content: space-between;
  align-items: center;
}
.repo-title {
  margin: 0;
  display: flex;
  align-items: center;
  font-size: 35px;
  font-weight: 400;
  letter-spacing: -0.5px;
  margin-top: -4px;
}
.repo-title .ic {
  margin-right: 12px;
}
.sep {
  margin: 0 9px;
  color: #586069;
}
.link {
  color: #2463d1;
}
.strong {
  font-weight: 600;
}
.ic {
  height: 32px;
  flex: none;
  fill: currentColor;
}
.ic-10 { width: 20px; }
.ic-12 { width: 24px; }
.ic-14 { width: 28px; }
.ic-15 { width: 30px; }
.ic-16 { width: 32px; }
.muted { color: #a3aab1; }
.muted2 { color: #6a737d; }

.repo-actions {
  display: flex;
  gap: 21px;
}
.social {
  display: flex;
  height: 56px;
}
.btn {
  height: 56px;
  display: inline-flex;
  align-items: center;
  justify-content: center;
  border: 2px solid #cfd2d6;
  border-bottom-width: 3px;
  border-radius: 6px;
  background: linear-gradient(#fafbfc, #eff3f6);
  font-size: 25px;
  font-weight: 600;
  white-space: nowrap;
}
.btn-social {
  padding: 0 20px;
  gap: 6px;
  border-radius: 6px 0 0 6px;
}
.btn-watch {
  padding: 0 19px;
  gap: 5px;
}
.btn-disabled {
  color: #a5abb1;
  background: #eff1f3;
}
.count {
  min-width: 59px;
  padding: 0 20px;
  display: flex;
  align-items: center;
  justify-content: center;
  border: 2px solid #cfd2d6;
  border-bottom-width: 3px;
  border-left: none;
  border-radius: 0 6px 6px 0;
  background-color: #fff;
  font-size: 25px;
  font-weight: 600;
}

.reponav {
  display: flex;
  height: 79px;
  margin-top: 32px;
  letter-spacing: -0.4px;
}
.navitem {
  height: 79px;
  display: flex;
  align-items: center;
  gap: 8px;
  padding: 4px 32.5px 0;
  color: #586069;
  font-size: 28px;
}
.navitem.selected {
  padding: 0 28px 2px 30px;
  height: 81px;
  background-color: #fff;
  border: 2px solid #e1e4e8;
  border-top: 6px solid #d66a2b;
  border-bottom: none;
  border-radius: 6px 6px 0 0;
  color: #24292e;
}
.counter {
  min-width: 34px;
  height: 32px;
  display: flex;
  align-items: center;
  justify-content: center;
  border-radius: 16px;
  background-color: #e9ebed;
  font-size: 24px;
  font-weight: 600;
  color: #586069;
}

.meta {
  display: flex;
  justify-content: space-between;
  padding-top: 49px;
}
.description {
  margin: 0;
  font-size: 31.2px;
  line-height: 48px;
}
.topics {
  display: block;
  margin-top: 23px;
  font-size: 24.5px;
  line-height: 32px;
}
.btn-edit {
  width: 89px;
}

.numbers {
  height: 86px;
  margin-top: 36px;
  display: flex;
  border: 2px solid #e1e4e8;
  border-radius: 6px;
  font-size: 28px;
  color: #586069;
}
.num {
  flex: 1;
  display: flex;
  align-items: center;
  justify-content: center;
  gap: 8px;
}
.num b {
  font-weight: 600;
  color: #24292e;
}
.num .link b {
  color: inherit;
}

.file-nav {
  display: flex;
  align-items: center;
  margin-top: 31px;
  padding: 0 3px 0 2px;
}
.btn-branch { width: 243px; }
.btn-branch .light { font-weight: 400; color: #586069; }
.btn-newpr { width: 243px; margin-left: 13px; }
.btn-group {
  display: flex;
  margin-left: auto;
}
.btn-group .btn {
  border-radius: 0;
  margin-left: -2px;
}
.btn-group .btn-create { width: 220px; border-radius: 6px 0 0 6px; margin-left: 0; }
.btn-upload { width: 184px; }
.btn-group .btn-find { width: 143px; border-radius: 0 6px 6px 0; }
.btn-clone {
  width: 285px;
  margin-left: 16px;
  border: 1px solid #4a9c4a;
  background: linear-gradient(#6cc766, #4ea54c);
  color: #fff;
}

.files {
  margin-top: 21px;
  border: 2px solid #e1e4e8;
  border-top: none;
  border-radius: 6px;
  font-size: 28px;
  color: #586069;
}
.tease {
  height: 85px;
  display: flex;
  align-items: center;
  margin: 0 -2px;
  padding: 0 21px 3px 22px;
  background-color: #f1f8ff;
  border: 2px solid #c8e1ff;
  border-radius: 6px 6px 0 0;
  font-size: 24.5px;
}
.tease-avatar {
  width: 40px;
  height: 40px;
  flex: none;
}
.author {
  margin-left: 10px;
  font-weight: 600;
  color: #24292e;
}
.tease-msg {
  margin-left: 8px;
}
.tease-right {
  margin-left: auto;
  font-size: 26px;
  letter-spacing: -0.1px;
}
.tease-right code {
  font-family: "DejaVu Sans Mono", monospace;
  font-size: 24px;
  letter-spacing: -0.3px;
  color: #444d56;
}
.file-row {
  height: 64px;
  display: flex;
  align-items: center;
  padding: 0 20px;
  border-top: 2px solid #eaecef;
}
.file-row.first {
  border-top: none;
  height: 65px;
  background-color: #f6f8fa;
}
.folder {
  color: #8a9bb5;
}
.file-ic {
  margin-right: 4px;
}
.file-name {
  margin-left: 10px;
  width: 589px;
  flex: none;
}
.file-msg {
  flex: 1;
}

.readme {
  margin-top: 22px;
  border: 2px solid #d1d5da;
  border-radius: 6px;
}
.readme-head {
  height: 68px;
  display: flex;
  align-items: center;
  gap: 6px;
  padding: 0 18px;
  background-color: #f6f8fa;
  border-bottom: 2px solid #d1d5da;
  border-radius: 6px 6px 0 0;
  font-size: 28px;
}
.readme-head b {
  font-weight: 600;
}
.pencil {
  margin-left: auto;
  color: #586069;
}
.markdown {
  padding: 84px 96px 79px;
}
.markdown h1 {
  margin: 0;
  height: 97px;
  line-height: 76px;
  border-bottom: 2px solid #eaecef;
  font-size: 62px;
  font-weight: 600;
  letter-spacing: -1.3px;
}
.markdown p {
  margin: 31px 0 0;
  font-size: 31.2px;
  line-height: 48px;
}

/* dock */
.dock {
  position: relative;
  width: 2182px;
  height: 130px;
  margin: 10px auto 0;
  display: flex;
  align-items: flex-start;
  padding: 14px 0 0 6px;
  background-color: #1a1e2e;
  border: 2px solid #3a3d4c;
  border-bottom: none;
  border-radius: 10px 10px 0 0;
  box-shadow: 0 -14px 60px rgba(0, 0, 0, 0.2);
}
.slot {
  position: relative;
  width: 106px;
  height: 92px;
  flex: none;
  display: flex;
  align-items: center;
  justify-content: center;
}
.slot.running::after {
  content: "";
  position: absolute;
  left: 50%;
  top: 104px;
  width: 7px;
  height: 7px;
  margin-left: -5px;
  border-radius: 50%;
  background-color: #8f92a4;
}
.dock-sep {
  width: 2px;
  height: 94px;
  flex: none;
  margin: 2px 24px 0 24px;
  background-color: #4c4f5e;
}
.tile {
  width: 92px;
  height: 90px;
  margin-left: -2px;
  margin-top: -4px;
  display: flex;
  align-items: center;
  justify-content: center;
  border: 4px solid;
  font-family: "Noto Sans", sans-serif;
  font-size: 60px;
  font-weight: 600;
  letter-spacing: 0;
  overflow: hidden;
}
.tile span {
  display: block;
  transform: scaleX(0.8);
}
.tile-pr { color: #e28ef0; background-color: #2f0f3c; }
.tile-ae { color: #d0a6f4; background-color: #22104a; }
.tile-an { color: #ec4a2a; background-color: #2a0a04; }
.tile-lr { color: #bcdcf0; background-color: #152c3c; }
.tile-ps { color: #4cc8f4; background-color: #0a2430; }
.tile-ai { color: #f2922a; background-color: #2e1804; }
.tile-id { color: #ec5ca4; background-color: #2e0520; }
.tile-acro { color: #e8432a; background-color: #2a0a04; }
.office-letter {
  font-family: "Noto Sans", sans-serif;
  font-size: 40px;
  fill: #fff;
  text-anchor: middle;
}
.calendar {
  width: 74px;
  height: 82px;
  transform: rotate(-6deg);
  background-color: #fafafa;
  border-bottom: 6px solid #555;
  box-shadow: -2px 2px 0 #666;
  text-align: center;
}
.cal-month {
  height: 24px;
  background-color: #d9605a;
  color: #fff;
  font-size: 18px;
  line-height: 24px;
  letter-spacing: 0;
}
.cal-day {
  font-size: 44px;
  line-height: 52px;
  font-weight: 300;
  color: #222;
}
.thumb {
  position: relative;
  width: 91px;
  height: 70px;
  margin-top: 10px;
}
.thumb-page {
  width: 91px;
  height: 62px;
  padding: 10px 16px;
  background: linear-gradient(90deg, #bbb 0 10px, #f4f4f4 10px 70px, #bbb 70px 80px, #f4f4f4 80px);
  border-top: 4px solid #ccc;
}
.thumb-page i {
  display: block;
  height: 3px;
  width: 42px;
  margin-bottom: 6px;
  background-color: #c4c4c4;
}
.thumb-pdf {
  position: absolute;
  right: 0;
  bottom: 0;
  width: 34px;
  height: 44px;
  display: flex;
  align-items: center;
  justify-content: center;
  background-color: #2a0a04;
  border: 2px solid #e8432a;
}
```
